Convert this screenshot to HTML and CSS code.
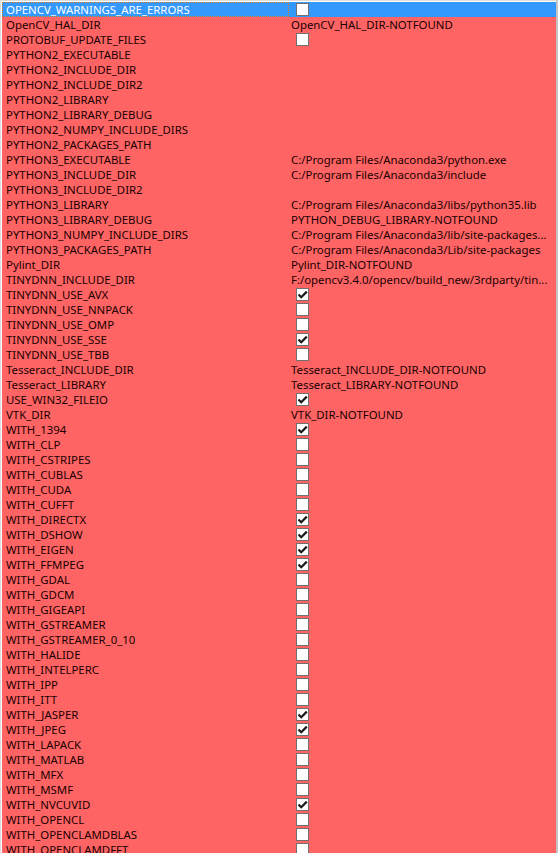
FILE: index.html
```html
<!DOCTYPE html>
<html lang="en">
<head>
    <meta charset="UTF-8">
    <meta name="viewport" content="width=device-width, initial-scale=1.0">
    <title>CMake Cache</title>
    <link rel="stylesheet" href="styles.css">
</head>
<body>
    <div class="view">
        <div class="table" id="table"></div>
    </div>

    <script>
        // name, value: true/false = checkbox, string = path text
        const entries = [
            ['OPENCV_WARNINGS_ARE_ERRORS', false],
            ['OpenCV_HAL_DIR', 'OpenCV_HAL_DIR-NOTFOUND'],
            ['PROTOBUF_UPDATE_FILES', false],
            ['PYTHON2_EXECUTABLE', ''],
            ['PYTHON2_INCLUDE_DIR', ''],
            ['PYTHON2_INCLUDE_DIR2', ''],
            ['PYTHON2_LIBRARY', ''],
            ['PYTHON2_LIBRARY_DEBUG', ''],
            ['PYTHON2_NUMPY_INCLUDE_DIRS', ''],
            ['PYTHON2_PACKAGES_PATH', ''],
            ['PYTHON3_EXECUTABLE', 'C:/Program Files/Anaconda3/python.exe'],
            ['PYTHON3_INCLUDE_DIR', 'C:/Program Files/Anaconda3/include'],
            ['PYTHON3_INCLUDE_DIR2', ''],
            ['PYTHON3_LIBRARY', 'C:/Program Files/Anaconda3/libs/python35.lib'],
            ['PYTHON3_LIBRARY_DEBUG', 'PYTHON_DEBUG_LIBRARY-NOTFOUND'],
            ['PYTHON3_NUMPY_INCLUDE_DIRS', 'C:/Program Files/Anaconda3/lib/site-packages...'],
            ['PYTHON3_PACKAGES_PATH', 'C:/Program Files/Anaconda3/Lib/site-packages'],
            ['Pylint_DIR', 'Pylint_DIR-NOTFOUND'],
            ['TINYDNN_INCLUDE_DIR', 'F:/opencv3.4.0/opencv/build_new/3rdparty/tin...'],
            ['TINYDNN_USE_AVX', true],
            ['TINYDNN_USE_NNPACK', false],
            ['TINYDNN_USE_OMP', false],
            ['TINYDNN_USE_SSE', true],
            ['TINYDNN_USE_TBB', false],
            ['Tesseract_INCLUDE_DIR', 'Tesseract_INCLUDE_DIR-NOTFOUND'],
            ['Tesseract_LIBRARY', 'Tesseract_LIBRARY-NOTFOUND'],
            ['USE_WIN32_FILEIO', true],
            ['VTK_DIR', 'VTK_DIR-NOTFOUND'],
            ['WITH_1394', true],
            ['WITH_CLP', false],
            ['WITH_CSTRIPES', false],
            ['WITH_CUBLAS', false],
            ['WITH_CUDA', false],
            ['WITH_CUFFT', false],
            ['WITH_DIRECTX', true],
            ['WITH_DSHOW', true],
            ['WITH_EIGEN', true],
            ['WITH_FFMPEG', true],
            ['WITH_GDAL', false],
            ['WITH_GDCM', false],
            ['WITH_GIGEAPI', false],
            ['WITH_GSTREAMER', false],
            ['WITH_GSTREAMER_0_10', false],
            ['WITH_HALIDE', false],
            ['WITH_INTELPERC', false],
            ['WITH_IPP', false],
            ['WITH_ITT', false],
            ['WITH_JASPER', true],
            ['WITH_JPEG', true],
            ['WITH_LAPACK', false],
            ['WITH_MATLAB', false],
            ['WITH_MFX', false],
            ['WITH_MSMF', false],
            ['WITH_NVCUVID', true],
            ['WITH_OPENCL', false],
            ['WITH_OPENCLAMDBLAS', false],
            ['WITH_OPENCLAMDFFT', false]
        ];

        const check = '<svg width="11" height="11" viewBox="0 0 11 11"><path d="M1.5 5.5 L4.2 8.2 L9.8 2.6" fill="none" stroke="#1a1a1a" stroke-width="2.2"/></svg>';

        const table = document.getElementById('table');
        entries.forEach(function (entry, i) {
            const row = document.createElement('div');
            row.className = i === 0 ? 'row selected' : 'row';

            const name = document.createElement('div');
            name.className = 'name';
            name.textContent = entry[0];

            const value = document.createElement('div');
            value.className = 'value';
            if (typeof entry[1] === 'boolean') {
                const box = document.createElement('span');
                box.className = 'checkbox';
                if (entry[1]) box.innerHTML = check;
                value.appendChild(box);
            } else {
                value.textContent = entry[1];
            }

            row.appendChild(name);
            row.appendChild(value);
            table.appendChild(row);
        });
    </script>
</body>
</html>
```

FILE: styles.css
```css
body {
    margin: 0;
    background: #fff;
    font-family: "Noto Sans", "DejaVu Sans", sans-serif;
    font-size: 11.4px;
    color: #1a0000;
    overflow: hidden;
}
.view {
    width: 558px;
    height: 853px;
    border-top: 1px solid #dcdcdc;
    border-left: 1px solid #dcdcdc;
    border-right: 2px solid #c4c4c4;
    box-sizing: border-box;
    padding: 1px 0 0 1px;
    overflow: hidden;
}
.table {
    display: flex;
    flex-direction: column;
}
.row {
    display: grid;
    grid-template-columns: 287px 1fr;
    height: 15px;
    line-height: 15px;
    background: #ff6464;
}
.row.selected {
    background: #3399ff;
    color: #fff;
}
.name, .value {
    white-space: nowrap;
    overflow: hidden;
}
.name {
    padding-left: 4px;
    box-sizing: border-box;
}
.row.selected .name {
    outline: 1px dotted #e07a1a;
    outline-offset: -1px;
}
.value {
    padding-left: 2px;
    display: flex;
    align-items: center;
}
.checkbox {
    width: 13px;
    height: 13px;
    box-sizing: border-box;
    border: 1px solid #707070;
    background: #fff;
    margin-left: 5px;
    display: flex;
    align-items: center;
    justify-content: center;
}
```
